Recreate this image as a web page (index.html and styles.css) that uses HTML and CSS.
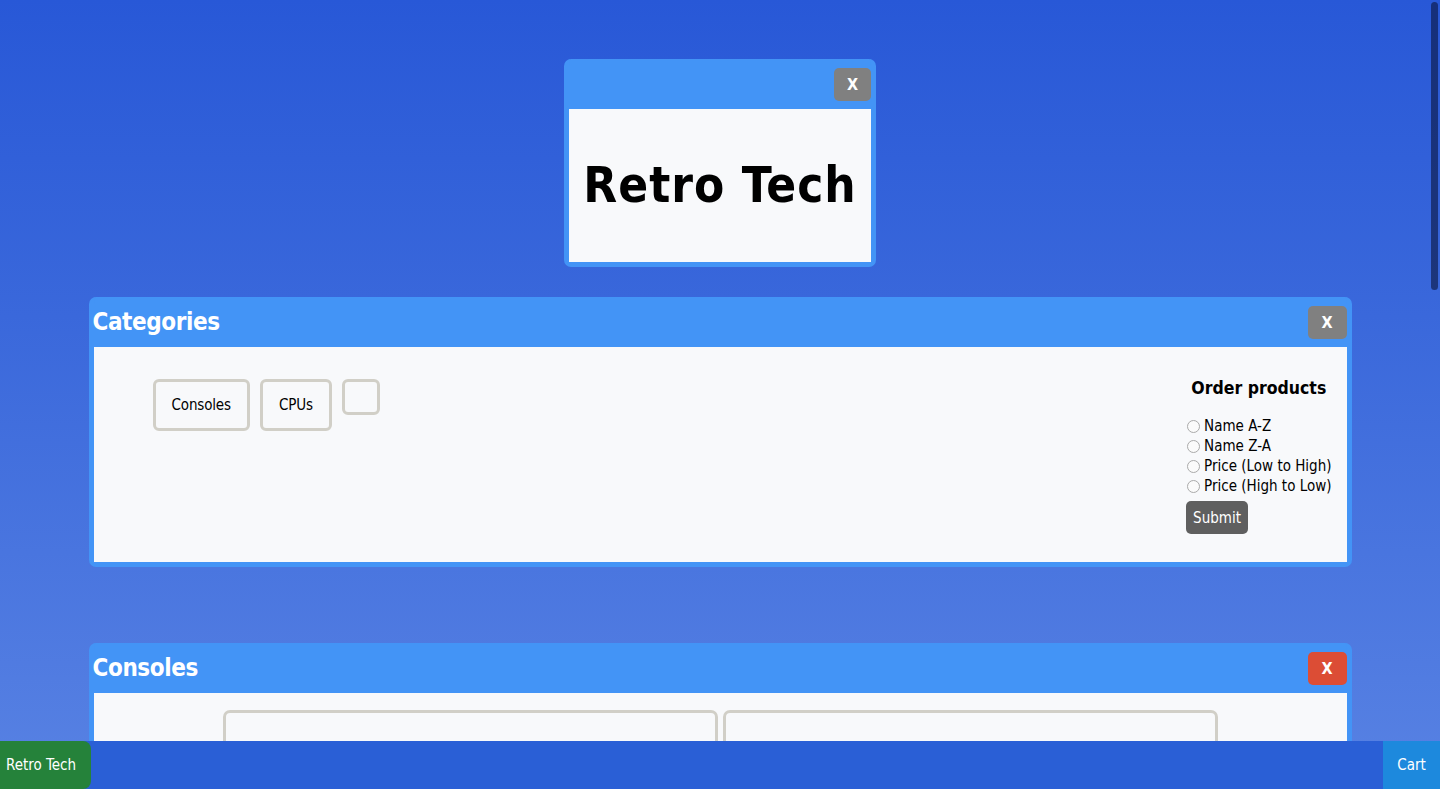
FILE: index.html
```html
<!DOCTYPE html>
<html lang="en">
<head>
<meta charset="utf-8">
<title>Retro Tech</title>
<link rel="stylesheet" href="styles.css">
</head>
<body>
<main class="desktop">
  <section class="window window--title">
    <header class="window__bar">
      <span class="window__title"></span>
      <button class="window__close window__close--small" type="button">X</button>
    </header>
    <div class="window__body brand-body">
      <h1 class="brand">Retro Tech</h1>
    </div>
  </section>

  <section class="window window--wide">
    <header class="window__bar">
      <h2 class="window__title">Categories</h2>
      <button class="window__close" type="button">X</button>
    </header>
    <div class="window__body categories">
      <nav class="category-list">
        <a class="category">Consoles</a>
        <a class="category">CPUs</a>
        <a class="category"></a>
      </nav>
      <form class="order">
        <h3 class="order__title">Order products</h3>
        <label class="order__option"><input class="order__radio" type="radio" name="order">Name A-Z</label>
        <label class="order__option"><input class="order__radio" type="radio" name="order">Name Z-A</label>
        <label class="order__option"><input class="order__radio" type="radio" name="order">Price (Low to High)</label>
        <label class="order__option"><input class="order__radio" type="radio" name="order">Price (High to Low)</label>
        <button class="order__submit" type="button">Submit</button>
      </form>
    </div>
  </section>

  <section class="window window--wide window--spaced">
    <header class="window__bar">
      <h2 class="window__title">Consoles</h2>
      <button class="window__close window__close--danger" type="button">X</button>
    </header>
    <div class="window__body products">
      <article class="product"></article>
      <article class="product"></article>
    </div>
  </section>
</main>

<footer class="taskbar">
  <button class="taskbar__home" type="button">Retro Tech</button>
  <button class="taskbar__cart" type="button">Cart</button>
</footer>
<div class="scroll-thumb"></div>
</body>
</html>
```

FILE: styles.css
```css
html {
  scrollbar-width: none;
  background: linear-gradient(180deg, #2858d7 0%, #3a68db 40%, #5882e3 100%) fixed;
  min-height: 100%;
}
html::-webkit-scrollbar {
  display: none;
}
body {
  margin: 0;
  font-family: "DejaVu Sans Condensed", "DejaVu Sans", sans-serif;
  font-stretch: condensed;
  font-size: 15px;
  color: #000;
}
.desktop {
  display: flex;
  flex-direction: column;
  align-items: center;
  padding: 59px 0 120px;
}
.window {
  border: 5px solid #4394f6;
  border-top-width: 0;
  border-radius: 7px;
  background: #4394f6;
  display: flex;
  flex-direction: column;
}
.window--title {
  width: 302px;
  margin-bottom: 30px;
}
.window--wide {
  width: 1253px;
}
.window--spaced {
  margin-top: 76px;
}
.window__bar {
  height: 50px;
  display: flex;
  justify-content: space-between;
  align-items: flex-start;
}
.window__title {
  margin: 0;
  margin-left: -1px;
  color: #fff;
  font-size: 24px;
  font-weight: bold;
  letter-spacing: -0.4px;
  line-height: 50px;
}
.window__close {
  margin-top: 9px;
  width: 39px;
  height: 33px;
  border: 0;
  border-radius: 5px;
  background: #808080;
  color: #fff;
  font-family: inherit;
  font-stretch: condensed;
  font-size: 16px;
  font-weight: bold;
  padding: 0;
  cursor: pointer;
}
.window__close--small {
  width: 37px;
}
.window__close--danger {
  background: #dc4d35;
}
.window__body {
  background: #f8f9fb;
}
.brand-body {
  height: 153px;
  display: flex;
  align-items: center;
  justify-content: center;
}
.brand {
  margin: 0;
  font-size: 49px;
  font-weight: bold;
  letter-spacing: 1px;
  line-height: 57px;
}
.categories {
  display: flex;
  justify-content: space-between;
  align-items: flex-start;
}
.category-list {
  display: flex;
  align-items: flex-start;
  gap: 10px;
  padding: 32px 0 0 59px;
}
.category {
  display: block;
  padding: 15px 16px;
  border: 3px solid #d1cfc7;
  border-radius: 6px;
  font-size: 15px;
  letter-spacing: -0.15px;
  line-height: 16px;
  color: #000;
  cursor: pointer;
}
.order {
  display: flex;
  flex-direction: column;
  align-items: flex-start;
  padding: 31px 15px 28px 0;
  margin: 0;
}
.order__title {
  align-self: stretch;
  text-align: center;
  margin: 0 0 17px;
  font-size: 17.5px;
  line-height: 21px;
  font-weight: bold;
}
.order__option {
  display: flex;
  align-items: center;
  height: 20px;
  font-size: 15px;
  white-space: nowrap;
}
.order__radio {
  appearance: none;
  -webkit-appearance: none;
  width: 13px;
  height: 13px;
  margin: 0 4px 0 1px;
  border: 1px solid #aaaaaa;
  border-radius: 50%;
  background: #fbfbfb;
}
.order__submit {
  margin-top: 5px;
  height: 33px;
  padding: 0 7px;
  border: 0;
  border-radius: 5px;
  background: #5f5f5f;
  color: #fff;
  font-family: inherit;
  font-stretch: condensed;
  font-size: 15px;
  font-weight: normal;
}
.products {
  display: flex;
  justify-content: center;
  gap: 5px;
  padding: 17px 0 40px;
}
.product {
  width: 489px;
  height: 400px;
  border: 3px solid #d1cfc7;
  border-radius: 7px;
}
.taskbar {
  position: fixed;
  left: 0;
  right: 0;
  bottom: 0;
  height: 48px;
  background: #2a5fd6;
  display: flex;
  justify-content: space-between;
}
.taskbar__home,
.taskbar__cart {
  border: 0;
  color: #fff;
  font-family: inherit;
  font-stretch: condensed;
  font-size: 15px;
  cursor: pointer;
}
.taskbar__home {
  width: 91px;
  padding: 0 9px 0 6px;
  background: #25823a;
  border-radius: 0 8px 8px 0;
  text-align: left;
}
.taskbar__cart {
  width: 57px;
  padding: 0;
  background: #1d89dd;
}
.scroll-thumb {
  position: fixed;
  top: 2px;
  right: 2px;
  width: 7px;
  height: 288px;
  border-radius: 4px;
  background: rgba(10, 20, 60, 0.6);
}
```
